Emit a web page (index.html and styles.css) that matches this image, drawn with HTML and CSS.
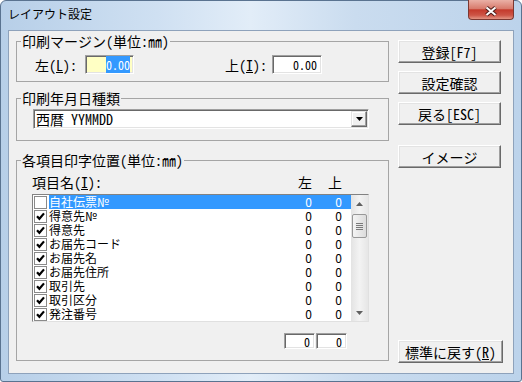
FILE: index.html
```html
<!DOCTYPE html>
<html lang="ja">
<head>
    <meta charset="UTF-8">
    <title>レイアウト設定</title>
    <link rel="stylesheet" href="styles.css">
</head>
<body>
    <div class="window">
        <div class="titlebar">
            <span class="title">レイアウト設定</span>
            <div class="close">
                <svg width="44" height="18" viewBox="0 0 44 18">
                    <path d="M17.5 6.5l9 7.5M26.5 6.5l-9 7.5" stroke="#4b1c18" stroke-width="4" fill="none"/>
                    <path d="M17.5 6.5l9 7.5M26.5 6.5l-9 7.5" stroke="#fff" stroke-width="2" fill="none"/>
                </svg>
            </div>
        </div>
        <div class="client">
            <div class="main">
                <fieldset class="group group-margin">
                    <legend>印刷マージン(単位:㎜)</legend>
                    <div class="margin-row">
                        <span class="label label-left">左(<u>L</u>):</span>
                        <span class="edit edit-margin focused"><span class="sel">0.00</span></span>
                        <span class="label label-top">上(<u>I</u>):</span>
                        <span class="edit edit-margin">0.00</span>
                    </div>
                </fieldset>
                <fieldset class="group group-date">
                    <legend>印刷年月日種類</legend>
                    <div class="combo">
                        <span class="combo-text">西暦 YYMMDD</span>
                        <span class="combo-btn">
                            <svg width="7" height="4" viewBox="0 0 7 4"><path d="M0 0h7L3.5 4z" fill="#000"/></svg>
                        </span>
                    </div>
                </fieldset>
                <fieldset class="group group-items">
                    <legend>各項目印字位置(単位:㎜)</legend>
                    <div class="list-head">
                        <span class="head-name">項目名(<u>I</u>):</span>
                        <span class="head-val">左</span>
                        <span class="head-val">上</span>
                    </div>
                    <div class="listbox">
                        <div class="rows">
                            <div class="row selected">
                                <span class="check"></span>
                                <span class="row-text"><span class="name">自社伝票№</span><span class="val">0</span><span class="val">0</span></span>
                            </div>
                            <div class="row">
                                <span class="check"><svg width="11" height="11" viewBox="0 0 11 11"><path d="M2 5.2l2.4 2.6L9 2.4" fill="none" stroke="#000" stroke-width="2.2"/></svg></span>
                                <span class="row-text"><span class="name">得意先№</span><span class="val">0</span><span class="val">0</span></span>
                            </div>
                            <div class="row">
                                <span class="check"><svg width="11" height="11" viewBox="0 0 11 11"><path d="M2 5.2l2.4 2.6L9 2.4" fill="none" stroke="#000" stroke-width="2.2"/></svg></span>
                                <span class="row-text"><span class="name">得意先</span><span class="val">0</span><span class="val">0</span></span>
                            </div>
                            <div class="row">
                                <span class="check"><svg width="11" height="11" viewBox="0 0 11 11"><path d="M2 5.2l2.4 2.6L9 2.4" fill="none" stroke="#000" stroke-width="2.2"/></svg></span>
                                <span class="row-text"><span class="name">お届先コード</span><span class="val">0</span><span class="val">0</span></span>
                            </div>
                            <div class="row">
                                <span class="check"><svg width="11" height="11" viewBox="0 0 11 11"><path d="M2 5.2l2.4 2.6L9 2.4" fill="none" stroke="#000" stroke-width="2.2"/></svg></span>
                                <span class="row-text"><span class="name">お届先名</span><span class="val">0</span><span class="val">0</span></span>
                            </div>
                            <div class="row">
                                <span class="check"><svg width="11" height="11" viewBox="0 0 11 11"><path d="M2 5.2l2.4 2.6L9 2.4" fill="none" stroke="#000" stroke-width="2.2"/></svg></span>
                                <span class="row-text"><span class="name">お届先住所</span><span class="val">0</span><span class="val">0</span></span>
                            </div>
                            <div class="row">
                                <span class="check"><svg width="11" height="11" viewBox="0 0 11 11"><path d="M2 5.2l2.4 2.6L9 2.4" fill="none" stroke="#000" stroke-width="2.2"/></svg></span>
                                <span class="row-text"><span class="name">取引先</span><span class="val">0</span><span class="val">0</span></span>
                            </div>
                            <div class="row">
                                <span class="check"><svg width="11" height="11" viewBox="0 0 11 11"><path d="M2 5.2l2.4 2.6L9 2.4" fill="none" stroke="#000" stroke-width="2.2"/></svg></span>
                                <span class="row-text"><span class="name">取引区分</span><span class="val">0</span><span class="val">0</span></span>
                            </div>
                            <div class="row">
                                <span class="check"><svg width="11" height="11" viewBox="0 0 11 11"><path d="M2 5.2l2.4 2.6L9 2.4" fill="none" stroke="#000" stroke-width="2.2"/></svg></span>
                                <span class="row-text"><span class="name">発注番号</span><span class="val">0</span><span class="val">0</span></span>
                            </div>
                        </div>
                        <div class="scrollbar">
                            <span class="sb-btn">
                                <svg width="7" height="4" viewBox="0 0 7 4"><path d="M0 4h7L3.5 0z" fill="#606060"/></svg>
                            </span>
                            <span class="thumb"><span class="grip"></span></span>
                            <span class="sb-btn sb-down">
                                <svg width="7" height="4" viewBox="0 0 7 4"><path d="M0 0h7L3.5 4z" fill="#606060"/></svg>
                            </span>
                        </div>
                    </div>
                    <div class="pos-row">
                        <span class="edit edit-small">0</span>
                        <span class="edit edit-small">0</span>
                    </div>
                </fieldset>
            </div>
            <div class="side">
                <button class="btn">登録[F7]</button>
                <button class="btn">設定確認</button>
                <button class="btn">戻る[ESC]</button>
                <button class="btn btn-image">イメージ</button>
                <button class="btn btn-reset">標準に戻す(<u>R</u>)</button>
            </div>
        </div>
    </div>
</body>
</html>
```

FILE: styles.css
```css
* {
    box-sizing: border-box;
}
body {
    margin: 0;
    width: 522px;
    height: 382px;
    overflow: hidden;
    background: #fff;
    font-family: "Noto Sans CJK JP", sans-serif;
    color: #000;
}
.window {
    width: 522px;
    height: 382px;
    display: flex;
    flex-direction: column;
    padding: 0 7px 7px;
    border: 1px solid #5a7390;
    border-radius: 6px 6px 3px 3px;
    background: linear-gradient(to right, #b7cfe8 0%, #cfe0f2 30%, #e2edf8 48%, #cadcef 68%, #bcd3eb 100%);
}
.titlebar {
    height: 29px;
    display: flex;
    align-items: flex-start;
}
.title {
    flex: 1;
    margin-top: 5px;
    font-size: 12px;
    line-height: 16px;
}
.close {
    width: 46px;
    height: 20px;
    margin-top: -1px;
    display: flex;
    align-items: center;
    justify-content: center;
    border: 1px solid #7c3831;
    border-top: none;
    border-radius: 0 0 4px 4px;
    background: linear-gradient(#eab0a6, #d87b6d 45%, #c43a2c 52%, #cd5546 80%, #e39584);
}
.client {
    flex: 1;
    display: flex;
    background: #f0f0f0;
    border: 1px solid #8ea2bb;
}
.main {
    width: 380px;
    padding: 3px 0 0 7px;
}
.group {
    margin: 0;
    min-width: 0;
    width: 373px;
    padding: 0;
    border: 1px solid #a5a5a5;
    font-family: "Noto Sans Mono CJK JP", "Noto Sans CJK JP", monospace;
    font-size: 14px;
}
.group legend {
    margin-left: 4px;
    padding: 0 1px;
    line-height: 14px;
}
.group-margin {
    padding: 7px 0 7px;
}
.group-date {
    margin-top: 9px;
    padding: 4px 0 11px;
}
.group-items {
    margin-top: 12px;
    padding: 8px 0 11px;
}
.margin-row {
    display: flex;
    align-items: center;
    height: 19px;
    padding-left: 18px;
}
.label {
    line-height: 14px;
}
.label-left {
    width: 50px;
}
.label-top {
    width: 47px;
    margin-left: 91px;
}
.edit {
    display: block;
    background: #fff;
    border: 1px solid;
    border-color: #a0a0a0 #fff #fff #a0a0a0;
    box-shadow: inset 1px 1px #696969, inset -1px -1px #e3e3e3;
    font-size: 12px;
    text-align: right;
}
.edit-margin {
    width: 50px;
    height: 19px;
    line-height: 15px;
    padding: 1px 4px 0 0;
}
.focused {
    width: 49px;
    background: #ffffc4;
    padding-right: 3px;
}
.sel {
    background: #3399ff;
    color: #fff;
}
.combo {
    display: flex;
    align-items: center;
    width: 336px;
    height: 20px;
    margin-left: 16px;
    background: #fff;
    border: 1px solid;
    border-color: #a0a0a0 #fff #fff #a0a0a0;
    box-shadow: inset 1px 1px #696969, inset -1px -1px #e3e3e3;
}
.combo-text {
    flex: 1;
    padding-left: 2px;
    line-height: 16px;
}
.combo-btn {
    width: 16px;
    height: 16px;
    margin-right: 1px;
    display: flex;
    align-items: center;
    justify-content: center;
    background: #f0f0f0;
    border: 1px solid;
    border-color: #e3e3e3 #696969 #696969 #e3e3e3;
    box-shadow: inset -1px -1px #a0a0a0, inset 1px 1px #fff;
}
.list-head {
    display: flex;
    width: 337px;
    margin-left: 15px;
    padding-right: 27px;
    line-height: 14px;
}
.head-name {
    flex: 1;
}
.head-val {
    width: 30px;
    text-align: right;
}
.listbox {
    display: flex;
    width: 337px;
    height: 128px;
    margin: 5px 0 0 15px;
    background: #fff;
    border: 1px solid;
    border-color: #828282 #e0e0e0 #e0e0e0 #828282;
    font-family: "Noto Sans CJK JP", sans-serif;
    font-size: 12px;
}
.rows {
    flex: 1;
}
.row {
    display: flex;
    align-items: center;
    height: 14px;
}
.check {
    width: 13px;
    height: 13px;
    margin-left: 1px;
    display: flex;
    align-items: center;
    justify-content: center;
    background: #fff;
    border: 1px solid #8a8a8a;
}
.row-text {
    flex: 1;
    display: flex;
    height: 14px;
    margin-left: 2px;
    padding-right: 9px;
    line-height: 14px;
}
.selected .row-text {
    background: #3399ff;
    color: #fff;
}
.name {
    flex: 1;
}
.val {
    width: 30px;
    text-align: right;
}
.scrollbar {
    width: 17px;
    display: flex;
    flex-direction: column;
    align-items: center;
    background: linear-gradient(to right, #e3e3e3, #f3f3f3 50%, #e6e6e6);
}
.sb-btn {
    width: 17px;
    height: 17px;
    display: flex;
    align-items: center;
    justify-content: center;
}
.sb-down {
    margin-top: auto;
}
.thumb {
    width: 15px;
    height: 24px;
    margin-top: 2px;
    display: flex;
    align-items: center;
    justify-content: center;
    border: 1px solid #989898;
    border-radius: 2px;
    background: linear-gradient(to right, #f4f4f4, #e8e8e8 50%, #dcdcdc);
}
.grip {
    width: 7px;
    height: 7px;
    background: repeating-linear-gradient(#7a7a7a 0 1px, transparent 1px 2px);
}
.pos-row {
    display: flex;
    justify-content: flex-end;
    gap: 1px;
    width: 337px;
    height: 16px;
    margin: 11px 0 0 15px;
    padding-right: 22px;
}
.edit-small {
    width: 31px;
    height: 16px;
    line-height: 13px;
    padding: 1px 4px 0 0;
}
.side {
    flex: 1;
    display: flex;
    flex-direction: column;
    padding: 9px 0 10px 9px;
}
.btn {
    width: 103px;
    height: 23px;
    padding: 0;
    margin-bottom: 8px;
    background: #f0f0f0;
    border: 1px solid;
    border-color: #fff #696969 #696969 #fff;
    box-shadow: inset -1px -1px #a0a0a0, inset 1px 1px #e3e3e3;
    font-family: "Noto Sans Mono CJK JP", "Noto Sans CJK JP", monospace;
    font-size: 14px;
    line-height: 20px;
    color: #000;
}
.btn-image {
    margin-top: 12px;
}
.btn-reset {
    width: 105px;
    margin: auto 0 0;
}
```
